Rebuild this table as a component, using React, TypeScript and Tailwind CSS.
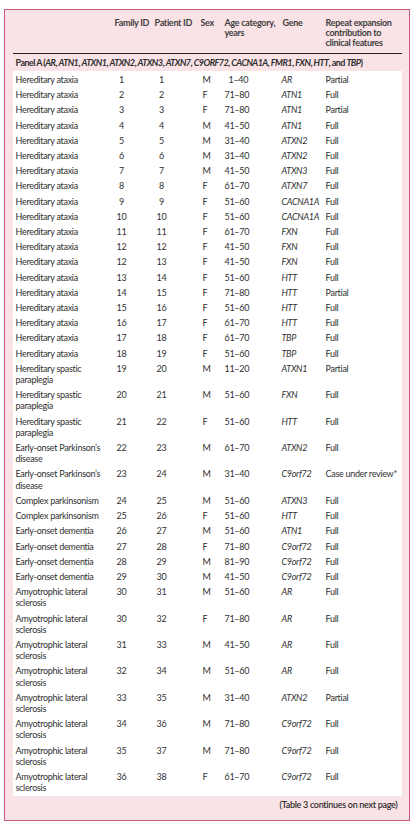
const rows: [string[], string, string, string, string, string, string][] = [
  [["Hereditary ataxia"], "1", "1", "M", "1–40", "AR", "Partial"],
  [["Hereditary ataxia"], "2", "2", "F", "71–80", "ATN1", "Full"],
  [["Hereditary ataxia"], "3", "3", "F", "71–80", "ATN1", "Partial"],
  [["Hereditary ataxia"], "4", "4", "M", "41–50", "ATN1", "Full"],
  [["Hereditary ataxia"], "5", "5", "M", "31–40", "ATXN2", "Full"],
  [["Hereditary ataxia"], "6", "6", "M", "31–40", "ATXN2", "Full"],
  [["Hereditary ataxia"], "7", "7", "M", "41–50", "ATXN3", "Full"],
  [["Hereditary ataxia"], "8", "8", "F", "61–70", "ATXN7", "Full"],
  [["Hereditary ataxia"], "9", "9", "F", "51–60", "CACNA1A", "Full"],
  [["Hereditary ataxia"], "10", "10", "F", "51–60", "CACNA1A", "Full"],
  [["Hereditary ataxia"], "11", "11", "F", "61–70", "FXN", "Full"],
  [["Hereditary ataxia"], "12", "12", "F", "41–50", "FXN", "Full"],
  [["Hereditary ataxia"], "12", "13", "F", "41–50", "FXN", "Full"],
  [["Hereditary ataxia"], "13", "14", "F", "51–60", "HTT", "Full"],
  [["Hereditary ataxia"], "14", "15", "F", "71–80", "HTT", "Partial"],
  [["Hereditary ataxia"], "15", "16", "F", "51–60", "HTT", "Full"],
  [["Hereditary ataxia"], "16", "17", "F", "61–70", "HTT", "Full"],
  [["Hereditary ataxia"], "17", "18", "F", "61–70", "TBP", "Full"],
  [["Hereditary ataxia"], "18", "19", "F", "51–60", "TBP", "Full"],
  [["Hereditary spastic", "paraplegia"], "19", "20", "M", "11–20", "ATXN1", "Partial"],
  [["Hereditary spastic", "paraplegia"], "20", "21", "M", "51–60", "FXN", "Full"],
  [["Hereditary spastic", "paraplegia"], "21", "22", "F", "51–60", "HTT", "Full"],
  [["Early-onset Parkinson’s", "disease"], "22", "23", "M", "61–70", "ATXN2", "Full"],
  [["Early-onset Parkinson’s", "disease"], "23", "24", "M", "31–40", "C9orf72", "Case under review*"],
  [["Complex parkinsonism"], "24", "25", "M", "51–60", "ATXN3", "Full"],
  [["Complex parkinsonism"], "25", "26", "F", "51–60", "HTT", "Full"],
  [["Early-onset dementia"], "26", "27", "M", "51–60", "ATN1", "Full"],
  [["Early-onset dementia"], "27", "28", "F", "71–80", "C9orf72", "Full"],
  [["Early-onset dementia"], "28", "29", "M", "81–90", "C9orf72", "Full"],
  [["Early-onset dementia"], "29", "30", "M", "41–50", "C9orf72", "Full"],
  [["Amyotrophic lateral", "sclerosis"], "30", "31", "M", "51–60", "AR", "Full"],
  [["Amyotrophic lateral", "sclerosis"], "30", "32", "F", "71–80", "AR", "Full"],
  [["Amyotrophic lateral", "sclerosis"], "31", "33", "M", "41–50", "AR", "Full"],
  [["Amyotrophic lateral", "sclerosis"], "32", "34", "M", "51–60", "AR", "Full"],
  [["Amyotrophic lateral", "sclerosis"], "33", "35", "M", "31–40", "ATXN2", "Partial"],
  [["Amyotrophic lateral", "sclerosis"], "34", "36", "M", "71–80", "C9orf72", "Full"],
  [["Amyotrophic lateral", "sclerosis"], "35", "37", "M", "71–80", "C9orf72", "Full"],
  [["Amyotrophic lateral", "sclerosis"], "36", "38", "F", "61–70", "C9orf72", "Full"],
];

const panelGenes = ["AR", "ATN1", "ATXN1", "ATXN2", "ATXN3", "ATXN7", "C9ORF72", "CACNA1A", "FMR1", "FXN"];

const cols = "grid grid-cols-[100px_40px_46px_23px_58px_43px_79px]";

export default function App() {
  return (
    <div className="w-[414px] bg-white pt-[9px] pb-[5px] text-[#303030] [font-family:Lato,'Noto_Sans',sans-serif] text-[9px] tracking-[-0.3px]">
      <div className="mx-[4px] border-[1.5px] border-[#c9587c] bg-[#fae3e6] px-[7.5px]">
        {/* column heads */}
        <div className={`${cols} pt-[8px] pb-[5px] leading-[10px] font-bold text-[#404040] border-b border-[#222]`}>
          <div />
          <div className="pl-[2px]">Family ID</div>
          <div className="pl-[2px]">Patient ID</div>
          <div className="pl-[2px]">Sex</div>
          <div className="pl-[3px]">Age category, years</div>
          <div className="pl-[3px]">Gene</div>
          <div className="pl-[3px]">
            Repeat expansion contribution to clinical features
          </div>
        </div>

        <div className="pl-[3px] py-[3px] leading-[11px] font-bold text-[#2e2e2e] whitespace-nowrap tracking-[-0.55px]">
          Panel A (
          {panelGenes.map((g) => (
            <span key={g}>
              <i>{g}</i>,{" "}
            </span>
          ))}
          <i>HTT</i>, and <i>TBP</i>)
        </div>

        <div className="bg-white pt-[1px] pb-[1px]">
          {rows.map(([cond, fam, pat, sex, age, gene, rep], i) => (
            <div key={i} className={`${cols} py-[2px] leading-[11.2px] whitespace-nowrap`}>
              <div className="pl-[3px]">
                {cond.map((l) => (
                  <div key={l}>{l}</div>
                ))}
              </div>
              <div>
                <span className="inline-block w-[18px] text-center">{fam}</span>
              </div>
              <div>
                <span className="inline-block w-[18px] text-center">{pat}</span>
              </div>
              <div className="pl-[4px]">{sex}</div>
              <div className={i === 0 ? "pl-[7px]" : "pl-[3px]"}>{age}</div>
              <div className="pl-[2px] italic">{gene}</div>
              <div className="pl-[3px]">{rep}</div>
            </div>
          ))}
        </div>

        <div className="text-right pr-[4px] pt-[3px] pb-[10px] leading-[11px] font-semibold text-[#2e2e2e]">
          (Table 3 continues on next page)
        </div>
      </div>
    </div>
  );
}
